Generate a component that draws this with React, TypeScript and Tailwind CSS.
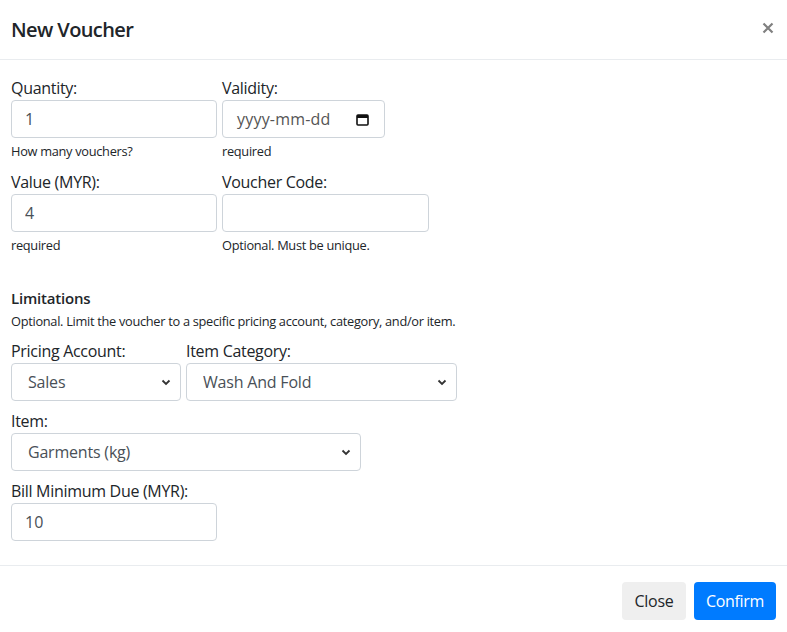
import React from "react";

const font = { fontFamily: '"Segoe UI", "Open Sans", "Liberation Sans", sans-serif' };

function Label({ children }: { children: React.ReactNode }) {
  return <label className="block h-6 leading-6 text-[16px] tracking-[-0.3px] text-[#212529]">{children}</label>;
}

function Help({ children }: { children: React.ReactNode }) {
  return <div className="mt-1 h-[19px] leading-[19px] text-[12.8px] tracking-[-0.3px] text-[#212529]">{children}</div>;
}

function TextBox({ value, width }: { value: string; width: string }) {
  return (
    <input
      defaultValue={value}
      className={`${width} h-[38px] rounded border border-[#ced4da] bg-white pl-[13px] pr-3 text-[16px] text-[#495057] outline-none`}
    />
  );
}

function Chevron() {
  return (
    <svg width="10" height="7" viewBox="0 0 10 7" className="pointer-events-none absolute right-[10px] top-[16px]">
      <path d="M1.5 1.5 L5 5 L8.5 1.5" fill="none" stroke="#333" strokeWidth="1.8" />
    </svg>
  );
}

function Select({ value, width }: { value: string; width: string }) {
  return (
    <div className={`relative ${width}`}>
      <select
        defaultValue={value}
        className="h-[38px] w-full appearance-none rounded border border-[#ced4da] bg-white pl-4 pr-8 text-[16px] tracking-[-0.2px] text-[#495057] outline-none"
      >
        <option>{value}</option>
      </select>
      <Chevron />
    </div>
  );
}

export default function App() {
  return (
    <div className="w-[787px] h-[632px] bg-white" style={font}>
      <header className="h-[60px] border-b border-[#e9ecef] flex items-center justify-between pl-[11px] pr-[13px]">
        <h5 className="text-[20px] font-semibold tracking-[-0.6px] text-[#212529]">New Voucher</h5>
        <button className="pb-1">
          <svg width="12" height="12" viewBox="0 0 12 12">
            <path d="M1.5 1.5 L10.5 10.5 M10.5 1.5 L1.5 10.5" stroke="#808080" strokeWidth="2.2" />
          </svg>
        </button>
      </header>

      <div className="pl-[11px] pt-4 h-[505px]">
        <div className="flex gap-[5px]">
          <div>
            <Label>Quantity:</Label>
            <TextBox value="1" width="w-[206px]" />
            <Help>How many vouchers?</Help>
          </div>
          <div>
            <Label>Validity:</Label>
            <div className="w-[163px] h-[38px] rounded border border-[#ced4da] flex items-center justify-between pl-[14px] pr-[15px]">
              <span className="text-[16px] tracking-[0.2px] text-[#555]">yyyy-mm-dd</span>
              <svg width="13" height="13" viewBox="0 0 13 13">
                <rect x="1" y="2" width="11" height="10" rx="1" fill="none" stroke="#111" strokeWidth="1.6" />
                <rect x="1" y="2" width="11" height="3" fill="#111" />
              </svg>
            </div>
            <Help>required</Help>
          </div>
        </div>

        <div className="flex gap-[5px] mt-[9px]">
          <div>
            <Label>Value (MYR):</Label>
            <TextBox value="4" width="w-[206px]" />
            <Help>required</Help>
          </div>
          <div>
            <Label>Voucher Code:</Label>
            <TextBox value="" width="w-[207px]" />
            <Help>Optional. Must be unique.</Help>
          </div>
        </div>

        <div className="mt-[31px] h-6 leading-6 text-[15px] font-semibold tracking-[-0.2px] text-[#212529]">Limitations</div>
        <div className="h-[19px] leading-[19px] text-[12.8px] tracking-[-0.3px] text-[#212529] mt-[2px]">
          Optional. Limit the voucher to a specific pricing account, category, and/or item.
        </div>

        <div className="flex gap-[5px] mt-[8px]">
          <div>
            <Label>Pricing Account:</Label>
            <Select value="Sales" width="w-[170px]" />
          </div>
          <div>
            <Label>Item Category:</Label>
            <Select value="Wash And Fold" width="w-[271px]" />
          </div>
        </div>

        <div className="mt-[8px]">
          <Label>Item:</Label>
          <Select value="Garments (kg)" width="w-[350px]" />
        </div>

        <div className="mt-[8px]">
          <Label>Bill Minimum Due (MYR):</Label>
          <TextBox value="10" width="w-[206px]" />
        </div>
      </div>

      <footer className="border-t border-[#e9ecef] flex justify-end gap-2 pt-4 pr-[11px]">
        <button className="h-[38px] w-[64px] rounded bg-[#efefef] text-[16px] tracking-[-0.3px] text-[#212529]">Close</button>
        <button className="h-[38px] w-[82px] rounded bg-[#007bff] text-[16px] tracking-[-0.3px] text-white">Confirm</button>
      </footer>
    </div>
  );
}
